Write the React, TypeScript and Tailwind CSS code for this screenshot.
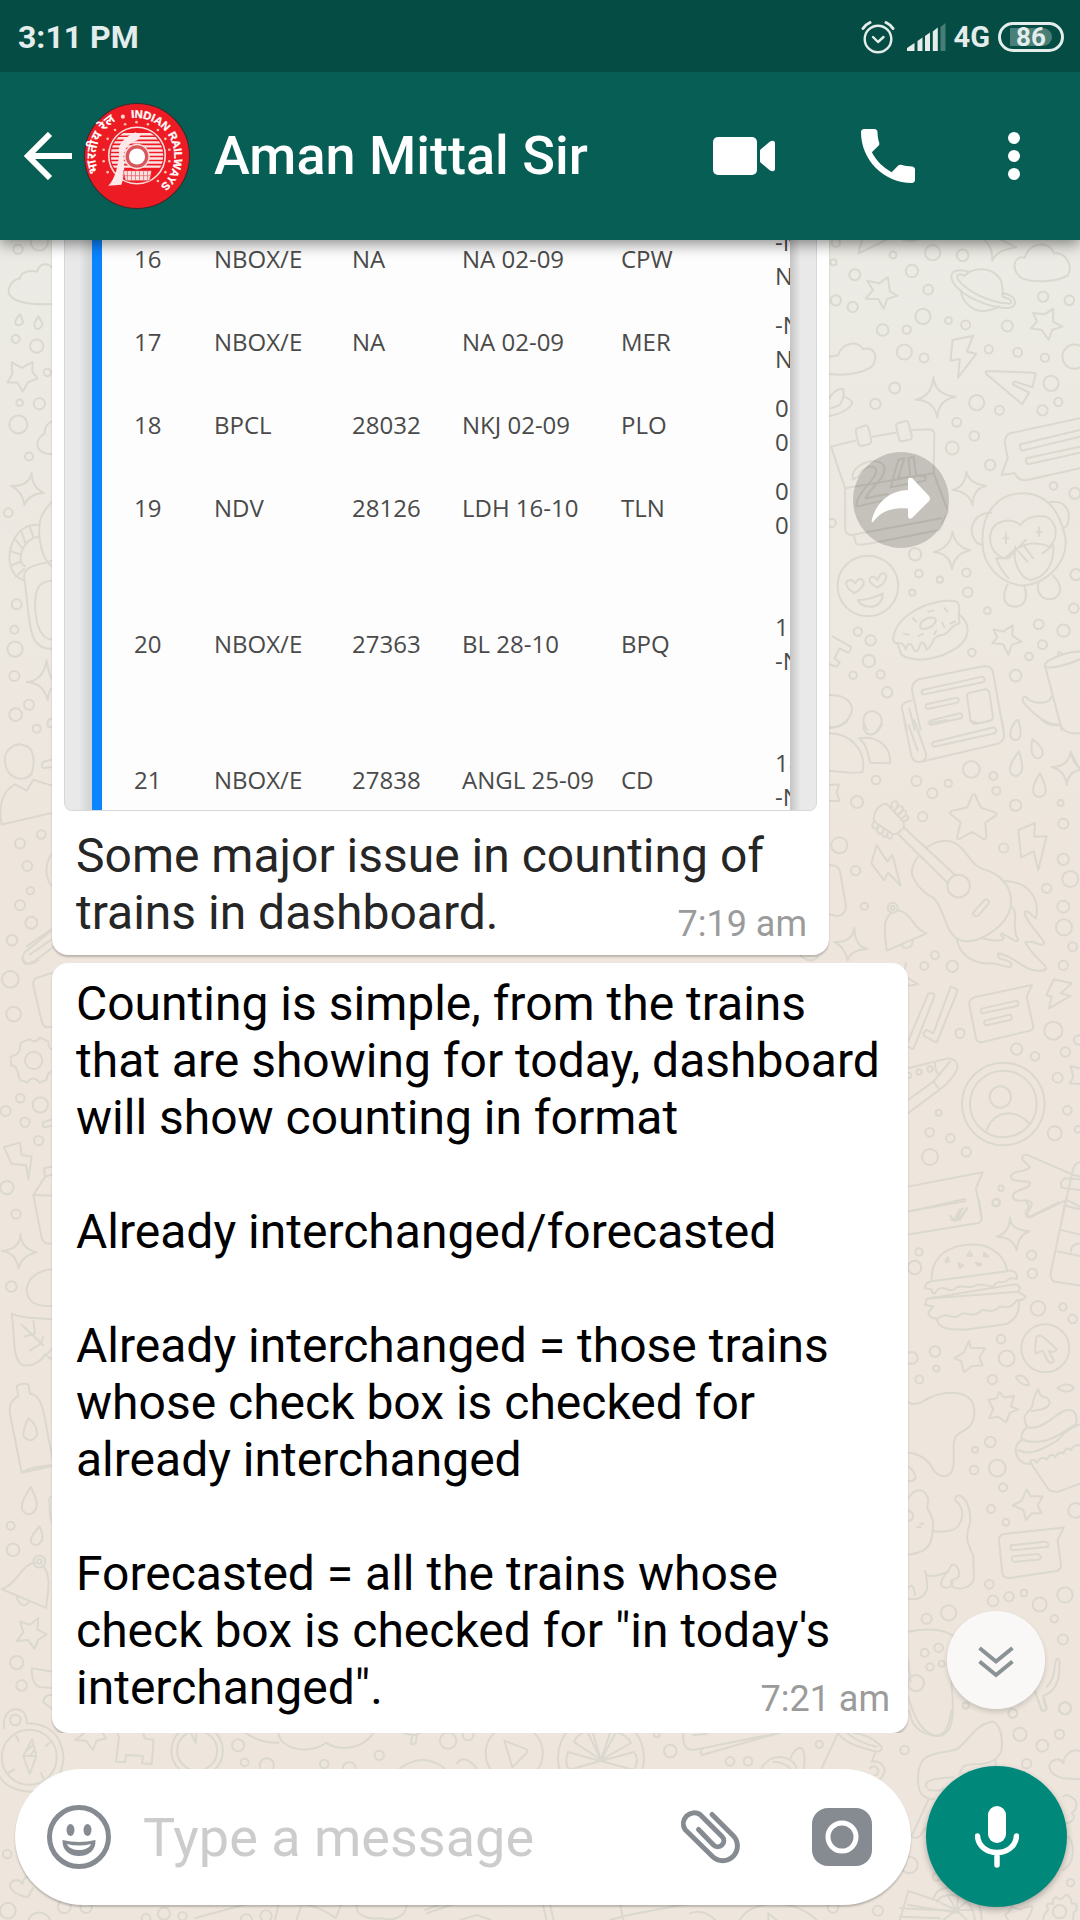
import React from "react";

type Circle = [number, number, number];

/* One patch of the wallpaper: line drawings plus loose bubbles. */
function Patch({
  x,
  y,
  sx,
  sy,
  paths,
  circles,
}: {
  x: number;
  y: number;
  sx: number;
  sy: number;
  paths: string[];
  circles: Circle[];
}) {
  return (
    <g>
      {paths.map((d, i) => (
        <path key={i} d={d} transform={`translate(${x} ${y}) scale(${sx} ${sy})`} vectorEffect="non-scaling-stroke" />
      ))}
      {circles.map(([cx, cy, r], i) => (
        <circle key={i} cx={x + cx * sx} cy={y + cy * sy} r={r * sx} />
      ))}
    </g>
  );
}

const SKY_PATHS = [
  "M1010 141L1016 184L1038 197L1008 207L998 236L982 207L946 206L967 180L950 152L985 160Z",
  "M1232 137C1260 110 1310 110 1335 145Q1345 165 1343 190M1222 180C1225 220 1260 245 1290 243Q1320 240 1332 228",
  "M1245 125C1200 112 1185 130 1200 158C1225 200 1310 237 1360 234C1388 230 1390 200 1343 188L1343 200C1375 208 1375 225 1355 220C1310 218 1240 185 1215 150C1205 133 1218 130 1232 137Z",
  "M1400 145C1365 120 1375 75 1408 83C1420 35 1480 30 1492 70C1525 65 1550 105 1532 137C1500 155 1440 160 1400 145Z",
  "M1490 236L1490 275L1517 290L1487 300L1477 330L1457 300L1425 295L1443 275L1432 249L1465 253Z",
  "M1198 330L1258 317L1239 365L1267 371L1214 443L1219 387L1192 392Z",
  "M1297 423Q1290 430 1300 436L1400 523L1420 488L1375 465Q1370 452 1385 457L1430 472L1439 432Q1438 428 1430 428Z",
  "M840 380L865 376C880 330 930 335 938 358C975 345 985 390 960 413C920 435 880 437 840 432",
  "M1142 442Q1148 495 1207 500Q1155 510 1154 563Q1145 510 1090 509Q1138 500 1142 442Z",
  "M840 505C855 480 870 475 880 478C885 495 880 510 870 525L845 535M880 500C910 510 910 520 900 530C880 550 860 555 840 558",
  "M845 650L915 632M965 620L1032 608M1080 600L1130 598Q1145 600 1145 612L1143 730L1185 845L1168 880M845 650L886 775L886 900Q890 915 905 915L1165 865M886 775L1143 730M912 920L918 942Q925 946 950 942L1160 900L1170 880",
  "M922 595L946 586Q952 586 954 595L962 632Q962 640 955 643L934 648Q926 648 924 640L917 604Q916 597 922 595Z",
  "M1039 580L1062 573Q1068 572 1070 580L1080 620Q1080 627 1073 629L1052 634Q1044 634 1042 626L1034 588Q1034 582 1039 580Z",
  "M908 748C900 700 985 675 1000 710C1005 745 965 765 945 805L1010 792L1012 808L918 830C920 780 985 745 975 715C960 700 930 720 925 740ZM1040 690L1058 684L1040 745L1075 740L1070 685L1085 680L1092 735L1120 740L1118 752L1095 757L1098 785L1082 788L1078 760L1018 772Z",
  "M1568 565L1365 610Q1350 615 1350 640L1358 685L1340 735L1378 730Q1390 755 1415 750L1568 715M1568 600L1395 643Q1390 655 1400 662L1568 620M1568 650L1412 685Q1408 698 1418 703L1568 668",
  "M1238 725Q1245 760 1295 768Q1258 775 1256 825Q1245 785 1198 780Q1235 770 1238 725Z",
  "M1198 905Q1205 950 1249 961Q1205 970 1196 1017Q1190 970 1143 966Q1190 955 1198 905Z",
  "M1285 940C1280 850 1330 790 1400 790C1475 790 1510 850 1525 920C1535 990 1480 1060 1400 1067C1340 1060 1285 1010 1285 940Z",
  "M1310 848C1250 850 1240 910 1270 940L1285 945M1475 818C1530 805 1545 850 1530 888L1518 895",
  "M1395 885C1370 860 1310 870 1307 920C1305 960 1330 980 1350 985Q1410 920 1480 950C1510 920 1500 860 1455 858C1420 858 1405 870 1395 885Z",
  "M1325 985L1360 985L1410 930M1325 985C1335 1020 1350 1030 1360 1045M1380 950C1370 1000 1400 1050 1425 1050C1460 1045 1495 1010 1490 945L1460 970M1390 965L1415 995M1407 950L1432 985",
  "M1358 1063C1340 1100 1345 1130 1380 1130C1415 1130 1415 1090 1405 1065M1447 1060C1440 1090 1460 1110 1485 1108C1520 1100 1515 1060 1490 1037",
  "M1353 910V940M1449 892V918M1346 925H1360M1442 905H1456",
  "M912 1090C885 1070 880 1050 905 1050Q912 1055 915 1060Q930 1035 940 1055C942 1070 930 1080 912 1090ZM980 1072C955 1060 950 1045 965 1040Q975 1042 980 1050Q990 1020 1005 1035C1008 1050 995 1065 980 1072ZM923 1110Q960 1110 995 1090C995 1120 975 1130 960 1130C940 1130 930 1125 923 1110Z",
  "M1025 1230C1030 1150 1150 1100 1210 1115C1225 1130 1212 1145 1218 1155C1250 1180 1250 1220 1215 1250C1160 1290 1090 1300 1050 1275Q1040 1250 1038 1240Q1028 1240 1025 1230Z",
  "M1038 1240Q1055 1235 1062 1258Q1072 1225 1085 1258Q1095 1275 1103 1245Q1115 1225 1122 1260C1150 1240 1130 1225 1165 1215C1190 1215 1185 1190 1218 1180L1215 1155M1103 1190C1105 1165 1145 1155 1150 1170C1145 1195 1105 1205 1103 1190Z",
  "M1127 1145L1143 1142M1174 1135L1184 1145M1083 1165L1092 1175M1057 1212L1072 1214M1099 1218L1112 1212M1145 1212L1151 1202M1168 1178L1174 1192M1192 1180L1206 1174",
  "M1372 1186L1372 1218L1398 1235L1370 1244L1360 1275L1345 1243L1313 1240L1328 1223L1317 1198L1345 1205Z",
  "M1105 1500L1080 1380Q1080 1355 1100 1348L1290 1308Q1310 1308 1315 1325L1345 1500M1080 1412Q1055 1415 1050 1430L1065 1500M1088 1500L1072 1435",
  "M1110 1380L1285 1340Q1295 1348 1288 1356L1112 1394Q1105 1388 1110 1380ZM1122 1423L1210 1403Q1222 1408 1212 1418L1125 1437Q1116 1432 1122 1423ZM1132 1472L1220 1450Q1232 1455 1222 1465L1135 1485Q1127 1480 1132 1472ZM1240 1400Q1238 1390 1250 1388L1292 1378Q1303 1378 1305 1390L1315 1460Q1316 1470 1305 1473L1265 1482Q1253 1482 1250 1470Z",
  "M1568 1265C1530 1265 1465 1290 1465 1308C1480 1320 1530 1305 1568 1288M1467 1310L1515 1500M1485 1400C1480 1425 1430 1425 1410 1400Q1400 1400 1402 1415C1430 1450 1470 1485 1510 1485M1505 1275Q1502 1262 1515 1270",
  "M840 1395C890 1395 910 1420 905 1445C895 1480 870 1490 840 1495M950 1500C930 1470 940 1445 965 1443C995 1450 1000 1475 980 1500",
  "M850 1220L902 1250Q905 1262 895 1268L870 1255L855 1285L870 1297L862 1310L840 1303",
  "M935 30L925 70L1005 30M1290 30Q1315 50 1313 92Q1325 60 1383 52L1340 30M1055 30Q1075 36 1095 30",
];
const SKY_CIRCLES: Circle[] = [
  [859, 38, 12], [1025, 75, 10], [1140, 68, 22], [1227, 76, 17], [1080, 123, 18], [914, 134, 16], [852, 97, 9],
  [1127, 179, 14], [859, 211, 15], [908, 231, 15], [1112, 259, 22], [1186, 272, 10], [1236, 285, 13], [995, 300, 17],
  [1065, 299, 12], [1357, 288, 16], [1461, 200, 15], [1537, 211, 14], [1058, 366, 22], [1115, 384, 13], [1303, 358, 12],
  [1387, 367, 13], [1466, 383, 12], [1484, 460, 22], [1552, 380, 35], [1030, 474, 16], [974, 522, 15], [1268, 518, 22],
  [1334, 541, 13], [1459, 541, 15], [1505, 516, 12], [1210, 577, 13], [1261, 618, 14], [1197, 654, 19], [1307, 705, 15],
  [1491, 768, 11], [1553, 790, 16], [847, 879, 12], [1089, 973, 18], [1100, 1031, 11], [1161, 1049, 9], [1238, 1028, 12],
  [1081, 1088, 9], [1242, 1087, 14], [1299, 1142, 10], [1556, 1034, 16], [1550, 1135, 14], [1448, 1183, 14],
  [1520, 1202, 18], [1459, 1244, 13], [923, 1205, 12], [960, 1231, 15], [955, 1293, 18], [909, 1336, 11],
  [989, 1333, 12], [1008, 1387, 15], [1254, 1268, 11], [1420, 1280, 11], [1381, 1337, 17], [952, 1068, 88],
];

const MUSIC_PATHS = [
  "M90 20Q115 25 140 5M190 15C190 50 225 55 245 15M88 40C150 40 200 90 188 155Q180 162 88 152M178 55C230 45 275 80 270 130L210 128C205 100 200 75 178 55Z",
  "M312 0L335 110Q342 128 360 126L590 72Q615 65 612 40L606 0M342 0L378 100Q380 118 366 124M326 15L353 92M398 67L582 22Q595 30 585 40L402 80Q392 75 398 67ZM385 10L440 0M510 0Q530 15 560 5L575 0",
  "M655 0C665 30 665 60 648 60C625 60 625 30 650 0M697 57C690 100 698 115 715 115C735 108 735 85 697 57ZM657 95C620 140 625 165 648 168C675 160 668 130 657 95ZM720 160C690 205 695 230 720 231C745 225 740 200 720 160ZM725 0Q750 20 780 15Q795 45 840 40",
  "M812 95Q820 135 840 142M840 150Q805 155 800 195Q795 150 755 141Q805 140 812 95Z",
  "M88 195L117 193L110 217L118 243L88 243",
  "M521 222Q516 225 514 232L502 262L455 273Q447 276 452 282L482 306L471 352Q472 360 480 356L517 336L552 358Q560 358 559 350L556 308L588 286Q594 280 585 277L543 263L527 228Q525 222 521 222Z",
  "M655 330L705 309L703 350L740 349L715 450L701 394L663 412Z",
  "M230 376L262 425L277 404L302 497L264 458L252 481L214 430Z",
  "M222 290C225 265 245 250 260 251L305 300Q315 310 311 323L295 338Q285 345 275 340L230 310Q218 300 222 290ZM292 340L440 486M311 322L463 463",
  "M275 262Q272 245 285 244Q297 246 292 258L284 272Q300 250 308 262Q312 272 294 286Q310 265 318 275Q322 285 302 298Q320 280 326 292Q325 302 311 303M222 305Q212 315 220 323Q228 330 238 315Q225 335 237 341Q248 343 252 325Q242 345 252 351Q262 350 265 334Q258 352 268 356Q277 356 278 342",
  "M382 381C420 355 460 355 485 385C510 410 515 435 550 448C600 460 640 500 632 560C620 620 540 670 490 663C430 650 440 570 400 533C370 520 320 470 340 435Q345 420 355 410",
  "M518 580L553 540Q562 535 567 545Q568 552 562 555L535 587Q525 593 518 580Z",
  "M615 483C690 485 720 540 708 595C700 595 690 570 675 575C665 590 725 650 733 668Q730 678 715 672C700 665 685 665 676 667C690 700 735 730 739 745Q735 753 720 752C670 755 650 710 595 700Q590 712 605 718C625 720 640 730 632 740C620 745 600 732 580 730C520 735 480 705 471 660",
  "M635 562C660 575 630 620 655 660Q650 668 635 657L605 640Q600 648 612 655C600 668 570 660 550 656",
  "M275 578C245 600 255 640 260 692L380 640C340 630 335 575 290 570M306 675Q308 687 325 683Q338 678 338 662",
  "M88 435Q115 435 120 455L137 550Q142 585 110 588L88 583",
  "M163 624Q165 680 202 687Q150 690 143 722Q135 680 102 666Q155 670 163 624Z",
  "M0 705Q30 735 55 710M318 730L312 760M325 775L355 793L325 797",
  "M762 778L815 790L783 820L812 828L747 865L755 830L739 825Z",
  "M324 980L340 988L404 828Q404 820 395 820L385 820L324 965M452 800L472 808L470 820L410 968L372 948Q368 935 380 930L400 940Z",
  "M522 832L696 795L680 830L700 920Q700 928 690 932L545 967Q532 967 528 955L508 855Q507 838 522 832ZM545 866L650 842Q660 850 652 858L548 880Q538 875 545 866ZM555 902L630 884Q640 892 632 900L558 916Q548 912 555 902Z",
  "M324 1045L440 1016Q475 1015 472 1045Q460 1080 415 1112L324 1180M324 1140L400 1085L450 1025M405 1028Q405 1060 420 1065M402 1085L415 1105",
  "M558 1235C580 1175 640 1160 690 1212",
  "M838 1045L812 1038L820 1070L810 1090L838 1092",
  "M840 1370L820 1365L682 1305Q665 1302 667 1318L690 1342C670 1360 640 1350 632 1368C635 1390 665 1378 690 1388C695 1410 640 1405 638 1430C645 1455 685 1430 695 1450C700 1465 675 1475 682 1490Q690 1495 700 1488L800 1440L840 1460M840 1325Q825 1330 820 1345L785 1500M795 1375L840 1378M795 1405L840 1410M795 1375Q778 1385 785 1402L795 1405",
  "M324 1400L548 1357L528 1405L546 1500M324 1475L495 1437M450 1487L463 1500L480 1468M480 1500L500 1465",
];
const MUSIC_CIRCLES: Circle[] = [
  [514, 148, 25], [349, 183, 15], [445, 190, 11], [397, 220, 15], [580, 168, 12], [589, 212, 12], [647, 256, 17],
  [782, 249, 9], [790, 311, 15], [228, 180, 13], [171, 246, 18], [368, 290, 14], [118, 376, 24], [167, 452, 14],
  [193, 559, 11], [611, 384, 14], [790, 418, 17], [811, 477, 24], [740, 505, 14], [790, 560, 18], [792, 622, 24],
  [818, 680, 13], [790, 736, 14], [476, 498, 34], [278, 563, 15], [278, 563, 6], [405, 706, 12], [373, 738, 12],
  [457, 739, 17], [480, 940, 14], [760, 932, 27], [650, 987, 17], [705, 1009, 13], [796, 996, 14], [773, 1073, 15],
  [836, 960, 14], [326, 1066, 8], [357, 1056, 8], [390, 1047, 8], [416, 1178, 9], [389, 1237, 13], [451, 1255, 13],
  [499, 1296, 14], [390, 1311, 24], [610, 1152, 124], [610, 1152, 100], [601, 1131, 32], [802, 1171, 13],
  [764, 1240, 21], [834, 1228, 10], [603, 1405, 8], [588, 1449, 11],
];

const FOOD_PATHS = [
  "M384 75L595 50Q607 48 604 35L598 0M384 25L555 3M512 42L527 45L548 18M534 43L562 18",
  "M690 38Q690 65 750 68Q715 75 710 110Q700 80 650 80Q690 70 690 38Z",
  "M455 172C455 120 510 97 580 97C640 97 675 125 682 155L455 177M682 155C700 150 715 160 710 172C690 168 690 172 675 178C660 180 650 175 640 188C620 190 610 180 590 185C570 195 550 185 530 190C515 205 500 190 480 192Q470 195 465 203Q455 205 455 195L435 192Q435 180 455 177",
  "M435 228L440 215L700 184Q715 182 720 192L715 200L737 210Q730 220 710 218C690 240 680 232 660 232C640 248 620 238 605 240C580 260 560 240 540 250C520 265 500 240 475 258Q450 260 445 245L460 232L435 228M440 215L715 200M470 258C475 280 500 283 560 282L680 270Q722 255 716 220",
  "M503 125Q495 130 497 136L508 133ZM570 112L562 121L576 122ZM535 138L540 148L550 142ZM587 136L595 143L605 140ZM612 115L612 123L625 123Z",
  "M858 0L812 160Q810 175 825 178L900 186M900 20L852 12M842 65L900 75M833 112L900 122M900 95Q875 95 872 112M735 0L745 10Q750 15 740 22Q730 35 750 36L835 5",
  "M567 307L572 322L615 323L598 343L608 360L575 362L552 375L543 350L522 345L552 332Z",
  "M770 297Q785 292 800 305L830 325Q825 335 805 328L822 350Q815 360 803 350L790 330Q780 328 768 335Q762 330 770 297Z",
  "M658 418L672 430L702 427L693 450L715 456L690 463L678 484L655 472L627 475L640 455L625 435L650 432Z",
  "M708 385Q735 375 748 403Q720 405 708 385ZM832 410Q860 395 882 408Q870 425 832 410Z",
  "M384 440Q405 450 430 438C480 415 560 410 580 445C590 475 575 495 545 505C500 520 535 560 515 592C500 605 480 605 462 590Q440 555 384 550M384 580Q405 590 407 605Q400 615 384 612",
  "M750 570L805 630Q815 637 835 635L900 618M750 570Q760 560 770 572Q785 555 800 565Q815 548 825 560Q840 545 850 552Q860 535 872 545Q885 530 900 535M748 575C720 575 700 555 710 535Q715 525 725 525Q720 505 742 495Q730 480 735 470C745 455 755 460 758 445Q760 430 775 412Q780 432 800 430Q815 440 805 448C790 460 770 455 755 460M740 494C780 505 820 470 850 460C880 450 895 465 888 488C860 500 830 520 790 525Q750 530 725 520M715 545C760 560 800 535 830 525C860 500 880 495 900 488",
  "M740 630L752 645L788 645L773 665L785 682L755 682L738 697L730 675L698 665L725 655Z",
  "M384 650C405 625 440 625 445 655C440 670 440 670 450 682C465 700 460 720 455 735C450 760 420 770 384 772M455 720Q480 725 510 720C550 715 560 670 527 655Q522 645 535 643C560 645 575 680 570 705C550 740 570 755 580 775L582 825C575 845 540 850 520 843Q510 835 515 828Q530 825 537 820C540 800 520 785 510 800C510 810 475 825 485 840C500 850 525 840 515 828M435 808Q445 835 440 850Q425 875 384 868M437 815Q460 825 505 808M384 675Q400 680 400 690Q395 700 384 698M412 712L422 712M420 705L430 705M384 845Q400 830 405 860",
  "M675 727L852 713L833 740L843 795Q845 803 830 808L690 823Q670 824 667 812L657 740Q656 730 675 727ZM693 752L795 744Q808 746 804 755L698 763Q688 760 693 752ZM698 776L775 771Q788 777 778 783L703 788Q690 785 698 776Z",
  "M384 940C450 930 520 935 535 965C550 990 510 1010 515 1060C525 1130 515 1165 475 1167C420 1165 395 1110 384 1080M384 1000L392 1050",
  "M800 1060C830 1040 820 1010 830 1000Q842 998 838 1015C840 1060 810 1075 790 1080L800 1105Q798 1115 785 1112L765 1070",
];
const FOOD_CIRCLES: Circle[] = [
  [404, 147, 20], [417, 113, 11], [755, 120, 14], [757, 160, 14], [774, 236, 22], [849, 233, 11], [878, 259, 13],
  [796, 323, 72], [663, 303, 13], [680, 345, 24], [465, 330, 16], [469, 367, 9], [395, 344, 18], [418, 391, 12],
  [637, 391, 14], [631, 527, 16], [585, 544, 9], [582, 588, 13], [652, 584, 25], [669, 626, 12], [633, 673, 12],
  [678, 702, 10], [887, 676, 22], [628, 837, 13], [639, 873, 16], [687, 864, 14], [732, 856, 10], [779, 881, 21],
  [855, 860, 23], [823, 912, 11], [506, 899, 23], [440, 912, 15], [849, 957, 15], [434, 986, 12], [476, 975, 13],
  [450, 1017, 11], [485, 1010, 9], [408, 1052, 24], [558, 1101, 9], [699, 1118, 13], [855, 1107, 18], [649, 5, 11],
];

const FOOT_PATHS = [
  "M370 98Q365 150 400 150L660 98M425 165L660 98M425 165Q418 150 430 145M400 105L440 102",
  "M835 98L785 205M835 98Q850 130 930 150C960 160 975 150 960 135Q930 105 880 98M860 98Q900 130 950 140M945 160L935 185C955 180 975 195 974 215Q965 235 958 240M930 205Q945 190 955 210Q957 225 945 225",
  "M605 205C620 175 660 160 690 180Q700 145 722 143Q738 150 732 205M640 185Q670 185 690 205M685 178Q705 185 710 205",
  "M1048 30Q1055 100 1130 108Q1165 105 1175 30",
  "M1200 220C1205 195 1220 192 1260 192Q1310 190 1325 150C1330 90 1310 60 1290 66C1240 80 1230 120 1190 148C1150 160 1120 155 1095 175C1070 195 1070 250 1080 275Q1090 295 1120 298M1100 262C1090 245 1110 235 1180 232M1105 270Q1150 275 1150 265M1105 300L1055 408Q1065 420 1080 408L1125 340M1307 180V200",
  "M1435 0L1445 30Q1452 35 1460 28L1450 0",
  "M1510 235C1460 225 1455 180 1495 178Q1505 180 1510 190C1515 155 1545 145 1560 155M1510 235L1560 238",
  "M1510 290Q1520 280 1530 290C1560 300 1550 330 1535 340C1555 350 1530 375 1510 370M1510 510C1545 490 1545 430 1525 410",
  "M1020 660L1045 573L1140 605M1045 615L1200 640M1020 650L1140 655M1120 595Q1130 565 1170 562Q1265 570 1265 660M1130 605C1145 575 1235 570 1245 660M1190 630L1145 610M1190 630L1165 590M1190 630L1195 585M1190 630L1225 600M1190 630L1240 630M1190 630L1220 660M1190 630L1150 660M1020 625L1180 632",
  "M1355 618Q1370 628 1380 628Q1410 615 1418 620Q1415 640 1400 660M1355 618Q1350 635 1335 645L1345 660",
  "M1480 600Q1485 585 1497 598Q1510 598 1515 585Q1530 585 1533 600L1535 610L1550 612V630L1540 640V660M1480 600L1478 612Q1462 608 1460 615L1465 632Q1450 640 1450 660",
  "M150 660L205 645L380 612M180 612L190 660M540 660C570 600 700 590 770 660M625 640V660M625 640L650 660M390 640Q430 625 465 660",
];
const FOOT_CIRCLES: Circle[] = [
  [290, 104, 8], [331, 153, 19], [510, 184, 13], [564, 184, 13], [778, 133, 11], [1034, 150, 13], [1217, 17, 9],
  [1358, 40, 13], [1515, 25, 18], [1380, 103, 20], [1499, 103, 14], [1447, 137, 18], [1400, 191, 14],
  [1048, 495, 25], [1130, 530, 12], [1532, 548, 11], [1499, 635, 20], [819, 622, 16], [954, 632, 15],
];

const COMPASS_PATHS = [
  "M12 85Q5 40 38 28Q75 25 75 70Q170 70 178 175Q170 270 85 275Q20 270 0 230",
  "M90 118L102 168L83 222L65 168ZM65 168H102M72 155L93 135M85 165L97 150M45 108L52 122M143 125L128 138M25 218L40 208M115 220L122 235",
  "M210 120L240 122L260 150L270 122L297 115L288 100M210 120L235 100M325 185L333 112L330 100M325 185L350 186L353 165L400 168L398 190L425 192L430 120L405 115L402 100",
  "M690 100Q730 130 780 128M780 100C785 150 870 165 912 128C960 160 1020 140 1045 100M1130 100Q1165 110 1175 100M1155 105L1150 130Q1160 138 1165 125L1167 105",
  "M1412 122L1475 148Q1480 155 1472 162L1435 202ZM1120 205Q1185 155 1245 205M1280 190Q1300 160 1335 205",
  "M78 592C20 580 15 540 50 540Q60 545 63 552C65 535 75 525 85 530M78 592L92 565",
  "M545 655L690 612M780 612L770 660M845 612L830 660M845 612Q900 620 940 655L955 615M1000 612C990 650 1040 660 1070 655C1100 665 1140 650 1138 612M1190 630L1235 612M1195 640L1270 612M1520 612L1530 660M1540 612L1550 660M1290 660L1335 645L1375 660M550 100L548 130L535 100",
];
const COMPASS_CIRCLES: Circle[] = [
  [43, 60, 15], [82, 172, 77], [552, 152, 72], [552, 152, 56], [667, 136, 17], [685, 187, 11], [747, 196, 20],
  [908, 192, 12], [978, 205, 18], [1062, 166, 13], [1255, 122, 23], [1311, 105, 15], [1440, 160, 80], [20, 462, 12],
  [22, 632, 22], [180, 620, 18], [241, 622, 16], [110, 672, 32], [459, 641, 17], [511, 649, 12], [409, 655, 12],
  [745, 648, 16], [690, 660, 16],
];

const LEFT_TOP_PATHS = [
  "M158 80C145 70 120 68 112 88C85 85 60 90 60 103C30 105 20 130 30 138Q50 160 158 157",
  "M60 178Q40 195 48 200Q60 205 70 195ZM115 183Q98 200 105 207Q120 215 128 198Z",
  "M35 280L65 292L98 280L97 300L113 315L85 322L68 342L52 323L22 323L37 305Z",
  "M158 405Q135 410 133 432Q110 440 112 458Q120 475 158 475",
  "M95 515Q95 545 132 557Q85 560 73 583Q70 555 33 542Q85 545 95 515Z",
  "M158 575C120 600 115 620 118 650C125 690 140 705 158 715M118 625C70 620 30 650 28 695C30 730 60 740 70 742M120 650C80 650 60 680 62 700Q65 710 75 712M65 640L75 662M90 630L100 650M45 655L68 675M30 680L62 688M32 712L62 702M48 735L72 718M158 700C120 710 70 710 72 735C85 790 85 850 105 870C120 885 140 888 158 887M158 742C115 745 105 760 105 800C110 850 130 868 158 868",
  "M140 912Q148 948 158 952M158 970Q148 970 143 996Q130 960 80 958Q130 955 140 912M158 1035Q140 1035 143 1052L158 1055M158 1122L130 1127Q120 1135 130 1140L158 1138",
  "M15 1125C10 1100 50 1085 70 1092C105 1095 105 1130 95 1152C70 1175 15 1160 15 1125ZM5 1260C-5 1220 5 1190 45 1175L80 1188L100 1165L158 1178M5 1260L158 1235",
  "M158 1320Q135 1340 140 1365Q145 1385 158 1392M158 1483L75 1530Q60 1545 75 1555Q90 1560 158 1520M80 1518L158 1480M90 1535L158 1502",
];
const LEFT_TOP_CIRCLES: Circle[] = [
  [54, 41, 14], [118, 25, 26], [47, 231, 12], [110, 246, 20], [142, 302, 11], [59, 366, 10], [118, 368, 17],
  [55, 412, 27], [87, 480, 12], [25, 599, 13], [50, 793, 15], [43, 847, 12], [45, 888, 23], [43, 945, 15],
  [87, 1006, 15], [47, 1027, 19], [110, 1057, 12], [60, 1300, 15], [124, 1281, 13], [82, 1348, 15], [91, 1400, 11],
  [60, 1431, 15], [94, 1468, 18], [36, 1505, 16],
];

const LEFT_LOW_PATHS = [
  "M70 0Q85 15 115 0M158 25L110 35Q98 38 100 50L125 120Q130 132 145 132L158 130",
  "M90 155Q105 165 120 152L145 160Q145 175 158 175M90 155L62 162Q62 178 50 185L32 190L33 207Q50 205 55 225L60 235L82 240Q100 225 118 240L140 235Q140 220 158 218",
  "M12 367L60 358L65 382L95 385L85 430L78 402L35 400ZM158 312L130 318Q125 325 133 328L158 325",
  "M158 420L135 425L100 460L158 462M135 425L132 408L158 405M100 460L125 545Q135 560 158 555",
  "M62 537Q62 565 110 573Q65 580 55 605Q50 575 5 570Q60 568 62 537ZM158 605C110 610 80 625 80 650C85 672 110 680 158 678",
  "M35 693C45 730 35 780 65 793C95 800 125 785 138 772Q150 785 155 780M35 693C70 705 120 700 158 705M158 760L145 770M65 715L130 755M100 708L105 732L75 738M130 738L122 752L90 765",
  "M65 1005L30 890C25 870 40 860 55 855L50 835Q65 828 85 832L90 850C120 850 130 880 135 900L158 980M65 1005L158 992M65 1005Q80 995 158 990M85 898Q65 925 72 935Q95 950 112 930Q110 910 85 898Z",
  "M92 1033C55 1070 60 1080 85 1087C125 1080 110 1055 92 1033ZM118 1110C85 1135 85 1145 110 1147C135 1140 130 1125 118 1110ZM158 1050L148 1055L150 1090L158 1105",
  "M5 1233C50 1225 70 1180 105 1182M128 1187C155 1205 145 1235 138 1270L5 1233M50 1248Q65 1275 88 1258",
  "M115 1290L112 1312L140 1322L115 1332L103 1350L85 1333L50 1335L70 1318L60 1297L90 1303ZM95 1388L158 1395M95 1388Q95 1420 120 1425L158 1427M158 1440Q130 1440 130 1455L158 1468",
];
const LEFT_LOW_CIRCLES: Circle[] = [
  [31, 38, 25], [41, 106, 22], [101, 197, 26], [61, 271, 13], [121, 284, 23], [17, 296, 15], [75, 318, 14],
  [116, 354, 14], [21, 446, 20], [48, 498, 14], [34, 640, 16], [32, 1109, 12], [39, 1156, 19], [118, 1179, 18],
  [118, 1179, 7], [50, 1377, 20], [65, 1422, 16],
];

function Wallpaper() {
  return (
    <svg
      aria-hidden="true"
      className="absolute inset-0 h-full w-full"
      viewBox="0 0 1080 1920"
      preserveAspectRatio="xMidYMid slice"
      fill="none"
      stroke="#dbd8cf"
      strokeWidth={2}
      strokeLinejoin="round"
      strokeLinecap="round"
    >
      <Patch x={540} y={230} sx={0.3444} sy={0.3333} paths={SKY_PATHS} circles={SKY_CIRCLES} />
      <Patch x={800} y={720} sx={0.3333} sy={0.3333} paths={MUSIC_PATHS} circles={MUSIC_CIRCLES} />
      <Patch x={780} y={1200} sx={0.3333} sy={0.4592} paths={FOOD_PATHS} circles={FOOD_CIRCLES} />
      <Patch x={560} y={1700} sx={0.3333} sy={0.3333} paths={FOOT_PATHS} circles={FOOT_CIRCLES} />
      {/* citrus slice */}
      <g>
        <circle cx={601} cy={1758} r={43} />
        <path d="M601 1760L574 1742Q577 1734 587 1731ZM601 1760L592 1730Q602 1726 611 1730ZM601 1760L616 1732Q627 1735 631 1743ZM601 1761L634 1752Q640 1760 634 1770ZM600 1761L568 1752Q564 1762 569 1770Z" />
      </g>
      <Patch x={0} y={1700} sx={0.3571} sy={0.3333} paths={COMPASS_PATHS} circles={COMPASS_CIRCLES} />
      <Patch x={0} y={230} sx={0.3333} sy={0.4719} paths={LEFT_TOP_PATHS} circles={LEFT_TOP_CIRCLES} />
      <Patch x={0} y={960} sx={0.3333} sy={0.5102} paths={LEFT_LOW_PATHS} circles={LEFT_LOW_CIRCLES} />
    </svg>
  );
}

function StatusBar() {
  return (
    <div className="flex h-18 items-center justify-between bg-[#054d44] pt-0.5 pr-4 pl-[18px] text-[#e4edeb]">
      <span className="text-[32px] leading-9 font-bold">3:11 PM</span>
      <div className="flex items-center">
        <svg className="mr-3 h-[34px] w-[34px]" viewBox="0 0 34 34" fill="none" stroke="currentColor" strokeWidth={2.4} strokeLinecap="round" strokeLinejoin="round">
          <circle cx="17" cy="19" r="13.3" />
          <path d="M12 17L17 22L22.500 17" />
          <path d="M2 8.500Q4.500 4.500 9 2.500M25 2.500Q29.500 4.500 32 8.500" strokeWidth={3} />
        </svg>
        <svg className="mr-2 h-7 w-[39px]" viewBox="0 0 39 28" fill="currentColor">
          <path d="M0 28V25L7.500 20V28ZM10.500 28V18L15.500 14.500V28ZM18 28V13L23 9.500V28ZM25.800 28V8.500L30.800 4.500V28Z" />
          <path d="M33.500 28V4L38.500 0V28Z" opacity=".3" />
        </svg>
        <span className="mr-2 text-[29px] leading-9 font-bold">4G</span>
        <div className="h-[30px] w-[66px] rounded-full border-3 border-current p-[3px]">
          <div className="mx-1.5 flex h-[18px] items-center justify-center rounded-r-full bg-[#4a7f78]">
            <span className="text-[26px] leading-[18px] font-bold">86</span>
          </div>
        </div>
      </div>
    </div>
  );
}

function RailwayCrest() {
  const dots = Array.from({ length: 15 }, (_, i) => {
    const a = ((i * 20 - 230) * Math.PI) / 180;
    return [52 + 33 * Math.cos(a), 52 + 33 * Math.sin(a)];
  });
  return (
    <svg className="h-[106px] w-[106px]" viewBox="0 0 105 105" role="img" aria-label="Indian Railways">
      <defs>
        <path id="crest-right" d="M47 15A38 38 0 0 1 78 80" />
        <path id="crest-left" d="M15.500 71A42 42 0 0 1 37 15" />
        <clipPath id="crest-disc"><circle cx="52.500" cy="52" r="26" /></clipPath>
      </defs>
      <circle cx="52.500" cy="52.500" r="52" fill="#ed1c24" stroke="#3b2b2c" strokeWidth="1" />
      <g fill="#fff" fontFamily="'Liberation Sans', 'Noto Sans Devanagari', sans-serif" fontWeight="bold">
        <text fontSize="11" stroke="#fff" strokeWidth=".3"><textPath href="#crest-right">INDIAN RAILWAYS</textPath></text>
        <text fontSize="13"><textPath href="#crest-left" startOffset="2">भारतीय रेल</textPath></text>
      </g>
      <circle cx="38.500" cy="13.500" r="2" fill="#ffd9c9" />
      {dots.map(([x, y], i) => (
        <circle key={i} cx={x} cy={y} r="1.300" fill="#ffc4a8" />
      ))}
      <circle cx="52.500" cy="52" r="28" fill="#ed1c24" stroke="#fbdcdc" strokeWidth="1.600" />
      <g clipPath="url(#crest-disc)" stroke="#fbe3e3" strokeWidth="2.400">
        <path d="M24 31H80M24 35H80M24 39H80M24 43H80M24 47H80M24 51H80M24 55H80M24 59H80M24 63H80" />
      </g>
      <path d="M24 82C31 76 34 60 35 50C32 42 40 34 51 29L56 32L53 37C43 40 40 46 39 54C41 64 39 76 37 81Z" fill="#fde9e9" />
      <circle cx="52.500" cy="53" r="12" fill="#d9575c" stroke="#fbdcdc" strokeWidth="1.500" />
      <circle cx="52.500" cy="53" r="8" fill="#fff" />
      <path d="M39 67H67L65 77H41Z" fill="#fbe3e3" stroke="#ed1c24" strokeWidth=".6" />
      <path d="M43 67V77M47 67V77M51 67V77M55 67V77M59 67V77M63 67V77M38 72H67" stroke="#e8686c" strokeWidth=".8" />
    </svg>
  );
}

function Header() {
  return (
    <header className="flex h-42 items-center bg-[#075e54] pr-[53px] pl-6 text-white">
      <button type="button" aria-label="Back" className="flex shrink-0 items-center gap-3">
        <svg className="h-12 w-12" viewBox="0 0 48 48" fill="none" stroke="currentColor" strokeWidth="6">
          <path d="M48 24H4M26 2L4 24L26 46" />
        </svg>
        <RailwayCrest />
      </button>
      <h1 className="min-w-0 flex-1 truncate pl-6 text-[54px] leading-16 font-medium">Aman Mittal Sir</h1>
      <div className="flex shrink-0 items-center">
        <button type="button" aria-label="Video call" className="mr-[86px]">
          <svg className="h-10 w-[62px]" viewBox="0 0 62 40" fill="currentColor">
            <rect x="0" y="1" width="44" height="38" rx="5" />
            <path d="M47 14L57 5.500Q62 3 62 8V32Q62 37 57 34.500L47 26Z" />
          </svg>
        </button>
        <button type="button" aria-label="Voice call" className="mr-[86px]">
          <svg className="h-[54px] w-[54px]" viewBox="3 3 18 18" fill="currentColor">
            <path d="M6.620 10.790c1.440 2.830 3.760 5.140 6.590 6.590l2.200-2.200c.27-.27.67-.36 1.020-.24 1.120.37 2.330.57 3.570.57.55 0 1 .45 1 1V20c0 .55-.45 1-1 1-9.390 0-17-7.610-17-17 0-.55.45-1 1-1h3.500c.55 0 1 .45 1 1 0 1.250.2 2.450.57 3.570.11.35.03.74-.25 1.020l-2.200 2.200z" />
          </svg>
        </button>
        <button type="button" aria-label="More options" className="flex h-12 w-[26px] justify-center">
          <svg className="h-12 w-3" viewBox="0 0 12 48" fill="currentColor">
            <circle cx="6" cy="6" r="6" />
            <circle cx="6" cy="24" r="6" />
            <circle cx="6" cy="42" r="6" />
          </svg>
        </button>
      </div>
    </header>
  );
}

type Row = { cells: string[]; tail: string[]; tall?: boolean };

const ROWS: Row[] = [
  { cells: ["16", "NBOX/E", "NA", "NA 02-09", "CPW"], tail: ["-N", "N"] },
  { cells: ["17", "NBOX/E", "NA", "NA 02-09", "MER"], tail: ["-N", "N"] },
  { cells: ["18", "BPCL", "28032", "NKJ 02-09", "PLO"], tail: ["0", "0"] },
  { cells: ["19", "NDV", "28126", "LDH 16-10", "TLN"], tail: ["0", "0"], tall: true },
  { cells: ["20", "NBOX/E", "27363", "BL 28-10", "BPQ"], tail: ["1", "-N"], tall: true },
  { cells: ["21", "NBOX/E", "27838", "ANGL 25-09", "CD"], tail: ["18", "-N"] },
];

function SharedTable() {
  return (
    <div className="flex overflow-hidden rounded-b-lg border-x border-b border-[#d4d8d8] bg-[#e9e9e9]">
      <div className="w-[27px] shrink-0 bg-linear-to-r from-[#e9e9e9] from-50% to-[#cfd2d2]" />
      <div className="min-w-0 flex-1 overflow-hidden border-l-10 border-[#0a84ff] bg-[#fdfdfd]">
        <table className="-mb-3 w-full table-fixed font-['Open_Sans'] text-[24px] leading-[34px] text-[#4a4a4a]">
          <colgroup>
            <col className="w-[112px]" />
            <col className="w-[138px]" />
            <col className="w-[110px]" />
            <col className="w-[159px]" />
            <col className="w-[154px]" />
            <col />
          </colgroup>
          <tbody>
            {ROWS.map((row) => (
              <tr key={row.cells[0]} className={row.tall ? "h-34 align-top" : "h-[83px] align-top"}>
                {row.cells.map((cell, i) => (
                  <td key={i} className={i === 0 ? "pt-6 pl-8 whitespace-nowrap" : "pt-6 whitespace-nowrap"}>
                    {cell}
                  </td>
                ))}
                <td className="overflow-hidden pt-[7px] whitespace-nowrap">
                  {row.tail[0]}
                  <br />
                  {row.tail[1]}
                </td>
              </tr>
            ))}
          </tbody>
        </table>
      </div>
      <div className="w-[26px] shrink-0 bg-linear-to-r from-[#c4c4c4] to-[#e9e9e9] to-40%" />
    </div>
  );
}

function Time({ children }: { children: string }) {
  return <time className="float-right mt-5 text-[36px] leading-10 text-[#9b9b9b]">{children}</time>;
}

function Messages() {
  return (
    <main className="relative flex min-h-0 flex-1 flex-col items-start justify-end gap-2 overflow-hidden pl-13">
      <div className="flex items-end gap-6">
        <article className="w-[777px] rounded-2xl bg-white px-3 pb-[11px] shadow-[0_2px_2px_rgba(0,0,0,0.22)]">
          <SharedTable />
          <p className="flow-root pt-4 pr-2.5 pl-3 text-[48px] leading-[57px] text-[#262626]">
            Some major issue in counting of
            <br />
            <Time>7:19 am</Time>
            trains in dashboard.
          </p>
        </article>
        <button type="button" aria-label="Forward" className="mb-[407px] flex h-24 w-24 shrink-0 items-center justify-center rounded-full bg-black/17 text-white">
          <svg className="h-[46px] w-[60px]" viewBox="0 0 60 46" fill="currentColor">
            <path d="M37 13V3Q37 0 41 1L58 19Q60 22 58 24L41 41Q37 43 37 39V31.500C20 30 9 35 2 45Q0 46 1 42C6 25 18 14 37 13Z" />
          </svg>
        </button>
      </div>
      <article className="w-[856px] rounded-2xl bg-white pt-3 pr-[18px] pb-3.5 pl-6 shadow-[0_2px_2px_rgba(0,0,0,0.22)]">
        <p className="flow-root text-[48px] leading-[57px] whitespace-pre-line text-black">
          {`Counting is simple, from the trains
that are showing for today, dashboard
will show counting in format

Already interchanged/forecasted

Already interchanged = those trains
whose check box is checked for
already interchanged

Forecasted = all the trains whose
check box is checked for "in today's
`}
          <Time>7:21 am</Time>
          interchanged".
        </p>
      </article>
      <button type="button" aria-label="Scroll to latest" className="absolute right-[35px] bottom-6 flex h-[98px] w-[98px] items-center justify-center rounded-full bg-[#faf9f8]/95 text-[#8b9295] shadow-[0_3px_5px_rgba(0,0,0,0.15)]">
        <svg className="mt-1 h-8 w-9" viewBox="0 0 36 32" fill="none" stroke="currentColor" strokeWidth="4">
          <path d="M1.500 2L18 15.500L34.500 2M1.500 15.500L18 29L34.500 15.500" />
        </svg>
      </button>
    </main>
  );
}

function Composer() {
  return (
    <form className="relative flex items-center gap-[15px] pt-[33px] pr-[13px] pb-[13px] pl-[15px]" onSubmit={(e) => e.preventDefault()}>
      <div className="flex h-34 min-w-0 flex-1 items-center rounded-full bg-white pr-[39px] pl-8 text-[#868b92] shadow-[0_2px_2px_rgba(0,0,0,0.22)]">
        <button type="button" aria-label="Emoji" className="shrink-0">
          <svg className="h-16 w-16" viewBox="0 0 64 64" fill="none" stroke="currentColor" strokeWidth="5">
            <circle cx="32" cy="32" r="29.500" />
            <ellipse cx="23.500" cy="25" rx="4" ry="6" fill="currentColor" stroke="none" />
            <ellipse cx="40.500" cy="25" rx="4" ry="6" fill="currentColor" stroke="none" />
            <path d="M15.500 35Q32 39 48.500 35C49 45 42 51 32 51S15 45 15.500 35ZM20 39Q32 42 44 39C41 47 23 47 20 39Z" fill="currentColor" fillRule="evenodd" stroke="none" />
          </svg>
        </button>
        <input
          type="text"
          aria-label="Message"
          placeholder="Type a message"
          className="ml-8 h-20 min-w-0 flex-1 bg-transparent pt-0.5 text-[54px] text-black outline-none placeholder:text-[#cccccc]"
        />
        <button type="button" aria-label="Attach" className="mr-[71px] shrink-0">
          <svg className="h-14 w-[62px]" viewBox="0 0 62 56" fill="none" stroke="currentColor" strokeWidth="5" strokeLinecap="round">
            <path d="M33 5.500L54 26.500A14.600 14.600 0 0 1 33.500 47.500L6 20.500A10.900 10.900 0 0 1 21 5.500L43 27.500A6 6 0 0 1 34.500 36L19.500 20.500" />
          </svg>
        </button>
        <button type="button" aria-label="Camera" className="shrink-0">
          <svg className="h-[58px] w-[60px]" viewBox="0 0 60 58">
            <rect width="60" height="58" rx="16" fill="currentColor" />
            <circle cx="30" cy="29" r="14" fill="none" stroke="#fff" strokeWidth="5" />
          </svg>
        </button>
      </div>
      <button type="button" aria-label="Record voice message" className="flex h-[141px] w-[141px] shrink-0 items-center justify-center rounded-full bg-[#00897b] text-white shadow-[0_3px_6px_rgba(0,0,0,0.28)]">
        <svg className="h-[62px] w-11" viewBox="0 0 44 62">
          <rect x="13" y="0" width="18" height="37" rx="9" fill="currentColor" />
          <path d="M2.500 30C4 52 40 52 41.500 30M22 47V59" fill="none" stroke="currentColor" strokeWidth="5.500" strokeLinecap="round" />
        </svg>
      </button>
    </form>
  );
}

export default function App() {
  return (
    <div className="relative isolate flex h-screen flex-col overflow-hidden bg-linear-to-b from-[#ebebe5] from-10% to-[#eee6dd] to-45% font-[Roboto,sans-serif]">
      <Wallpaper />
      <div className="relative z-10 shadow-[0_4px_14px_rgba(0,0,0,0.45)]">
        <StatusBar />
        <Header />
      </div>
      <Messages />
      <Composer />
    </div>
  );
}
